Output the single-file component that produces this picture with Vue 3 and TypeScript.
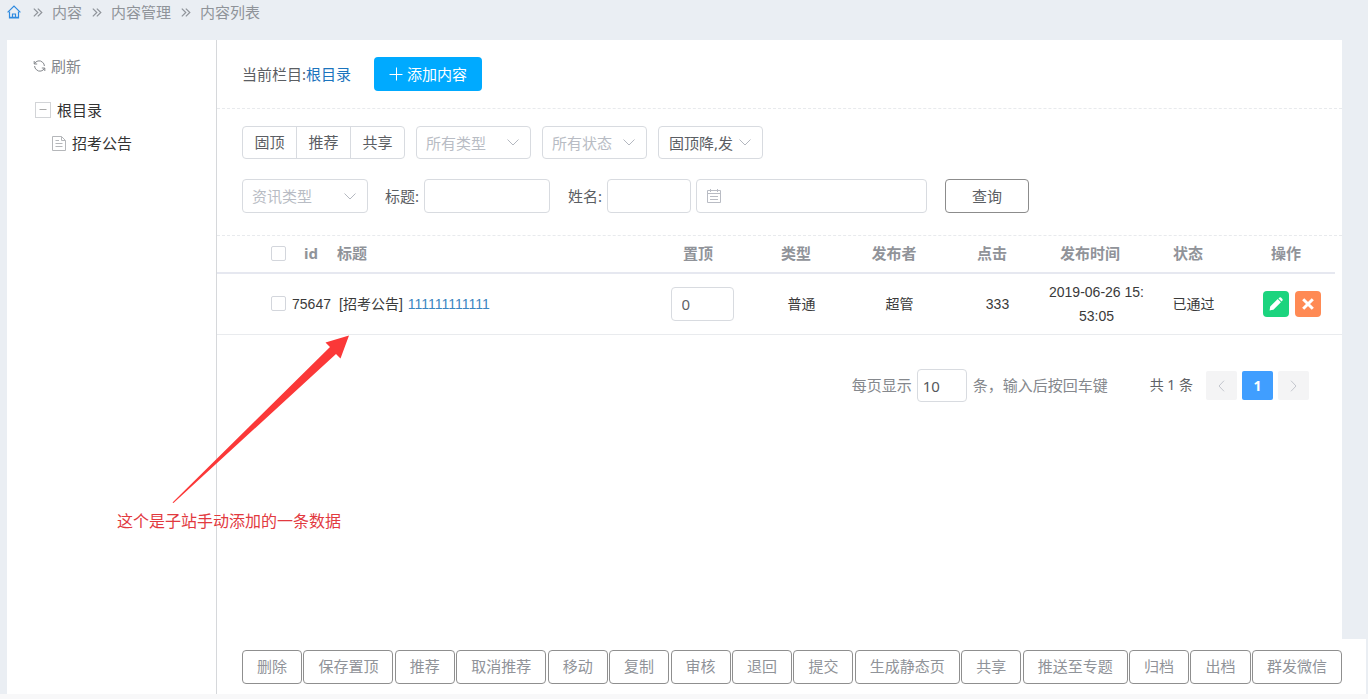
<script setup lang="ts">
import { ref } from 'vue'

interface Row {
  id: number
  channel: string
  title: string
  top: string
  type: string
  author: string
  clicks: number
  day: string
  time: string
  status: string
}

const crumbs: string[] = ['内容', '内容管理', '内容列表']
const flags: string[] = ['固顶', '推荐', '共享']
const heads: string[] = ['置顶', '类型', '发布者', '点击', '发布时间', '状态', '操作']
const actions: string[] = [
  '删除', '保存置顶', '推荐', '取消推荐', '移动', '复制', '审核', '退回',
  '提交', '生成静态页', '共享', '推送至专题', '归档', '出档', '群发微信',
]
const rows = ref<Row[]>([
  {
    id: 75647, channel: '[招考公告]', title: '111111111111', top: '0', type: '普通',
    author: '超管', clicks: 333, day: '2019-06-26 15:', time: '53:05', status: '已通过',
  },
])
const pageSize = ref('10')
</script>

<template>
  <div class="page">
    <nav class="crumbs">
      <a href="#" class="home" aria-label="首页">
        <svg width="14" height="14" viewBox="0 0 14 14" fill="none" stroke="#2e8ae0" stroke-width="1.2">
          <path d="M0.6 7.4 L7 1 L13.4 7.4" />
          <path d="M2.5 6.5 V13 H11.5 V6.5" />
          <path d="M5.5 13 V9 H8.5 V13 M2.5 12.4 H11.5" />
        </svg>
      </a>
      <template v-for="c in crumbs" :key="c">
        <svg class="sep" width="10" height="9" viewBox="0 0 10 9" fill="none" stroke="#8f9399" stroke-width="1.2">
          <path d="M0.8 0.6 L4.8 4.5 L0.8 8.4 M4.8 0.6 L8.8 4.5 L4.8 8.4" />
        </svg>
        <a href="#">{{ c }}</a>
      </template>
    </nav>

    <div class="body">
      <aside class="side">
        <button type="button" class="refresh">
          <svg width="13" height="12" viewBox="0 0 13 12" fill="none" stroke="#85888d">
            <path d="M1.2 1 V4 H4.2 M1.4 4 A5 5 0 0 1 9.5 2.2 Q11.4 3.8 11.4 6" />
            <path d="M11.8 11 V8 H8.8 M11.6 8 A5 5 0 0 1 3.5 9.8 Q1.6 8.2 1.6 6" />
          </svg>
          刷新
        </button>
        <ul class="tree">
          <li>
            <a href="#" class="node">
              <svg width="16" height="16" viewBox="0 0 16 16" fill="none" stroke="#d2d4d7">
                <rect x="0.5" y="0.5" width="15" height="15" />
                <path d="M4.5 7.5 H11.5" stroke="#aaa" />
              </svg>
              根目录
            </a>
            <ul class="sub">
              <li>
                <a href="#" class="node">
                  <svg width="14" height="15" viewBox="0 0 14 15" fill="none" stroke="#b5b7ba">
                    <path d="M0.5 0.5 H9.5 L13.5 4.5 V14.5 H0.5 Z M9.5 0.5 V4.5 H13.5" />
                    <path d="M3.5 4.5 H7 M3.5 7.5 H10.5 M3.5 10.5 H10.5" />
                  </svg>
                  招考公告
                </a>
              </li>
            </ul>
          </li>
        </ul>
      </aside>

      <main class="main">
        <div class="content">
          <header class="head">
            <span>当前栏目:<a href="#">根目录</a></span>
            <button type="button" class="add">
              <svg width="14" height="14" viewBox="0 0 14 14" stroke="#fff" fill="none">
                <path d="M7.5 0.5 V13.5 M0.5 7.5 H13.5" />
              </svg>
              添加内容
            </button>
          </header>

          <form class="filters" @submit.prevent>
            <div class="line">
              <div class="group">
                <button v-for="f in flags" :key="f" type="button">{{ f }}</button>
              </div>
              <div class="pick w-type">
                <select aria-label="所有类型" class="empty"><option>所有类型</option></select>
                <svg width="12" height="7" viewBox="0 0 12 7"><path d="M0.5 0.5 L6 6 L11.5 0.5" /></svg>
              </div>
              <div class="pick w-state">
                <select aria-label="所有状态" class="empty"><option>所有状态</option></select>
                <svg width="12" height="7" viewBox="0 0 12 7"><path d="M0.5 0.5 L6 6 L11.5 0.5" /></svg>
              </div>
              <div class="pick w-state">
                <select aria-label="排序" class="sort"><option>固顶降,发</option></select>
                <svg width="12" height="7" viewBox="0 0 12 7"><path d="M0.5 0.5 L6 6 L11.5 0.5" /></svg>
              </div>
            </div>
            <div class="line second">
              <div class="pick w-news">
                <select aria-label="资讯类型" class="empty"><option>资讯类型</option></select>
                <svg width="12" height="7" viewBox="0 0 12 7"><path d="M0.5 0.5 L6 6 L11.5 0.5" /></svg>
              </div>
              <label class="field f-title" for="f-title">标题:</label>
              <input id="f-title" type="text" class="box w-title" />
              <label class="field" for="f-name">姓名:</label>
              <input id="f-name" type="text" class="box w-name" />
              <div class="date">
                <svg width="14" height="14" viewBox="0 0 14 14" fill="none" stroke="#b9bcc4">
                  <path d="M0.5 1.5 H13.5 V13.5 H0.5 Z M0.5 4.5 H13.5 M3.5 0 V3 M10.5 0 V3 M3 7.5 H11 M3 10.5 H11" />
                </svg>
                <input type="text" class="box" aria-label="日期" />
              </div>
              <button type="submit" class="query">查询</button>
            </div>
          </form>

          <div class="list">
            <table>
              <colgroup>
                <col class="c-check" /><col class="c-id" /><col />
                <col v-for="h in heads" :key="h" class="c-data" />
              </colgroup>
              <thead>
                <tr>
                  <th class="check"><input type="checkbox" aria-label="全选" /></th>
                  <th>id</th>
                  <th class="left">标题</th>
                  <th v-for="h in heads" :key="h">{{ h }}</th>
                </tr>
              </thead>
              <tbody>
                <tr v-for="r in rows" :key="r.id">
                  <td class="check"><input type="checkbox" aria-label="选择" /></td>
                  <td class="num">{{ r.id }}</td>
                  <td class="left">{{ r.channel }} <a href="#">{{ r.title }}</a></td>
                  <td class="order"><input v-model="r.top" type="text" class="box top" aria-label="置顶" /></td>
                  <td class="data">{{ r.type }}</td>
                  <td class="data">{{ r.author }}</td>
                  <td class="data">{{ r.clicks }}</td>
                  <td class="order"><time>{{ r.day }}<br />{{ r.time }}</time></td>
                  <td class="data">{{ r.status }}</td>
                  <td class="data">
                    <div class="ops">
                      <button type="button" class="edit" aria-label="编辑">
                        <svg width="14" height="14" viewBox="0 0 14 14" fill="#fff">
                          <path d="M0.6 13.4 L1.2 9.6 L8.7 2.1 L11.9 5.3 L4.4 12.8 Z M9.5 1.4 L10.5 0.5 Q11.3 0 12 0.6 L13.4 2 Q14 2.7 13.5 3.4 L12.6 4.5 Z" />
                        </svg>
                      </button>
                      <button type="button" class="remove" aria-label="删除">
                        <svg width="12" height="12" viewBox="0 0 12 12" stroke="#fff" stroke-width="3">
                          <path d="M1.2 1.2 L10.8 10.8 M10.8 1.2 L1.2 10.8" />
                        </svg>
                      </button>
                    </div>
                  </td>
                </tr>
              </tbody>
            </table>
          </div>

          <div class="pager">
            <label for="size">每页显示</label>
            <input id="size" v-model="pageSize" type="text" class="box size" />
            <span class="hint">条，输入后按回车键</span>
            <span class="total">共 1 条</span>
            <button type="button" disabled aria-label="上一页">
              <svg width="7" height="12" viewBox="0 0 7 12"><path d="M6 0.7 L1 6 L6 11.3" /></svg>
            </button>
            <button type="button" class="on">1</button>
            <button type="button" disabled aria-label="下一页">
              <svg width="7" height="12" viewBox="0 0 7 12"><path d="M1 0.7 L6 6 L1 11.3" /></svg>
            </button>
          </div>
        </div>

        <footer class="actions">
          <button v-for="a in actions" :key="a" type="button">{{ a }}</button>
        </footer>
      </main>

      <div class="note">
        <svg width="178" height="170" viewBox="0 0 178 170" fill="#fb3838">
          <path d="M0.5 167.5 L158 12 L153.5 7.5 L177 0.5 L168.5 23.5 L164 19 L1.5 168 Z" />
        </svg>
        <p>这个是子站手动添加的一条数据</p>
      </div>
    </div>
  </div>
</template>

<style>
body {
  margin: 0;
  background: #eaeef3;
}
</style>

<style scoped>
.page {
  box-sizing: border-box;
  min-height: 100vh;
  display: flex;
  flex-direction: column;
  border-bottom: 5px solid #f8f8f9;
  font-family: "Noto Sans", "Noto Sans CJK SC", sans-serif;
  font-size: 15px;
  line-height: 24px;
  color: #5b5e63;
}
a {
  color: #1b74bd;
  text-decoration: none;
}
button, input, select {
  box-sizing: border-box;
  margin: 0;
  font: inherit;
  color: inherit;
  outline: none;
}
button {
  padding: 0;
  border: 0;
  background: none;
  white-space: nowrap;
}
.crumbs {
  display: flex;
  align-items: center;
  height: 24px;
  padding: 0 7px 16px;
}
.crumbs a {
  color: #8f9399;
}
.crumbs .home {
  display: flex;
}
.sep {
  margin: 0 9px 0 10px;
}
.home + .sep {
  margin-left: 12px;
}
.body {
  position: relative;
  flex: 1;
  display: flex;
  margin: 0 2px 0 7px;
}
.side {
  box-sizing: border-box;
  flex: 0 0 210px;
  padding: 14px 26px;
  background: #fff;
  border-right: 1px solid #d6d8db;
}
.refresh {
  display: flex;
  align-items: center;
  gap: 5px;
  color: #85888d;
}
.tree, .sub {
  margin: 0;
  padding: 0;
  list-style: none;
}
.tree {
  padding: 20px 2px 0;
}
.sub {
  padding: 9px 0 0 17px;
}
.node {
  display: flex;
  align-items: center;
  gap: 6px;
  color: #333;
}
.main {
  flex: 1;
  min-width: 0;
  display: flex;
  flex-direction: column;
}
.content {
  flex: 1;
  margin-right: 24px;
  background: #fff;
}
.head {
  display: flex;
  align-items: center;
  gap: 23px;
  padding: 17px 25px;
  border-bottom: 1px dashed #e8eaed;
}
.add {
  display: flex;
  align-items: center;
  gap: 4px;
  height: 34px;
  padding: 0 15px;
  border-radius: 4px;
  background: #00aaff;
  color: #fff;
}
.filters {
  padding: 17px 25px 22px;
  border-bottom: 1px dashed #e8eaed;
}
.line {
  display: flex;
  align-items: center;
  gap: 11px;
}
.second {
  gap: 5px;
  margin-top: 20px;
}
.group {
  display: flex;
  border: 1px solid #d8dbe0;
  border-radius: 4px;
}
.group button {
  width: 53px;
  height: 31px;
  padding-bottom: 2px;
}
.group button + button {
  width: 54px;
  border-left: 1px solid #d8dbe0;
}
.pick {
  display: grid;
  align-items: center;
}
.pick > * {
  grid-area: 1 / 1;
}
.pick svg {
  justify-self: end;
  margin-right: 12px;
  fill: none;
  stroke: #b4b8c0;
  pointer-events: none;
}
.pick select, .box {
  width: 100%;
  height: 33px;
  padding: 0 10px;
  border: 1px solid #d8dbe0;
  border-radius: 4px;
  background: #fff;
}
.second .pick select, .second .box {
  height: 34px;
}
.pick select {
  appearance: none;
  padding-left: 9px;
}
.pick .empty {
  color: #b8bcc4;
}
.pick .sort {
  padding-left: 10px;
}
.w-type { width: 115px; }
.w-state { width: 105px; }
.w-news { width: 126px; }
.second .w-title { width: 126px; }
.second .w-name { width: 84px; }
.field {
  margin-left: 13px;
}
.f-title {
  margin-left: 12px;
}
.date {
  display: grid;
  align-items: center;
  width: 231px;
}
.date > * {
  grid-area: 1 / 1;
}
.date svg {
  z-index: 1;
  margin-left: 11px;
}
.query {
  width: 84px;
  height: 34px;
  margin-left: 13px;
  border: 1px solid #8c8c8c;
  border-radius: 4px;
}
.list {
  padding-right: 7px;
  border-bottom: 1px solid #e9ebee;
}
table {
  width: 100%;
  table-layout: fixed;
  border-collapse: collapse;
}
.c-check { width: 69px; }
.c-id { width: 50px; }
.c-data { width: 98px; }
th, td {
  padding: 0;
  text-align: center;
}
th {
  height: 34px;
  padding-bottom: 2px;
  border-bottom: 2px solid #e6e8f0;
  color: #909399;
  font-weight: 700;
}
td {
  height: 60px;
  font-family: "Liberation Sans", "Noto Sans CJK SC", sans-serif;
  font-size: 14px;
  color: #3a3a3a;
}
.order {
  padding-left: 8px;
}
.data {
  padding-left: 11px;
}
.num {
  padding-left: 1px;
}
.check {
  text-align: right;
}
th.left {
  padding-left: 1px;
  text-align: left;
}
td.left {
  padding-left: 3px;
  text-align: left;
}
.check input {
  appearance: none;
  display: inline-block;
  width: 15px;
  height: 15px;
  margin-bottom: 3px;
  border: 1px solid #d3d6dc;
  border-radius: 2px;
  background: #fff;
  vertical-align: middle;
}
td a {
  margin-left: 1px;
  color: #3b86c2;
}
time {
  display: inline-block;
  white-space: nowrap;
}
.box.top {
  width: 63px;
  height: 34px;
  font-family: "Noto Sans", sans-serif;
  font-size: 15px;
  color: #606266;
}
.ops {
  display: flex;
  justify-content: center;
  gap: 6px;
}
.ops button {
  display: flex;
  align-items: center;
  justify-content: center;
  width: 26px;
  height: 26px;
  border-radius: 4px;
}
.edit { background: #1bd47e; }
.remove { background: #ff8a54; }
.pager {
  display: flex;
  align-items: center;
  justify-content: flex-end;
  gap: 5px;
  padding: 34px 33px 0 25px;
  color: #85888d;
}
.box.size {
  width: 50px;
  padding: 0 5px;
  color: #55585d;
}
.hint {
  margin: 0 37px 0 1px;
}
.total {
  margin-right: 8px;
  font-size: 14px;
  color: #606266;
}
.pager label, .pager span {
  padding-bottom: 2px;
}
.pager button {
  display: flex;
  align-items: center;
  justify-content: center;
  width: 31px;
  height: 29px;
  border-radius: 2px;
  background: #f4f4f5;
}
.pager button svg {
  fill: none;
  stroke: #c3c6cd;
}
.pager .on {
  background: #409eff;
  color: #fff;
  font-size: 14px;
  font-weight: 700;
}
.actions {
  display: flex;
  justify-content: space-between;
  padding: 11px 24px 10px 25px;
  background: #fff;
}
.actions button {
  height: 34px;
  padding: 0 14px 2px;
  border: 1px solid #8f8f8f;
  border-radius: 4px;
  color: #909399;
}
.note {
  position: absolute;
  left: 110px;
  top: 295px;
  pointer-events: none;
}
.note svg {
  display: block;
  margin-left: 55px;
}
.note p {
  margin: 4px 0 0;
  font-size: 16px;
  color: #e23a3f;
}
</style>
